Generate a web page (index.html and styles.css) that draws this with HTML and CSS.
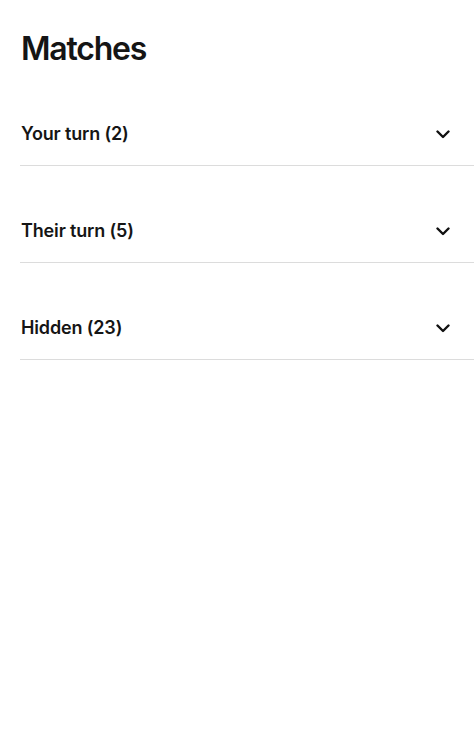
FILE: index.html
```html
<!DOCTYPE html>
<html>
<head>
<meta charset="utf-8">
<link rel="stylesheet" href="styles.css">
</head>
<body>
<main class="page">
  <h1 class="title">Matches</h1>
  <div class="section">
    <span class="label">Your turn (2)</span>
    <svg class="chev" viewBox="0 0 14 9" width="14" height="9"><path d="M1.5 1.5 L7 7 L12.5 1.5" fill="none" stroke="#111" stroke-width="2.4" stroke-linecap="round" stroke-linejoin="round"/></svg>
  </div>
  <div class="section">
    <span class="label">Their turn (5)</span>
    <svg class="chev" viewBox="0 0 14 9" width="14" height="9"><path d="M1.5 1.5 L7 7 L12.5 1.5" fill="none" stroke="#111" stroke-width="2.4" stroke-linecap="round" stroke-linejoin="round"/></svg>
  </div>
  <div class="section">
    <span class="label">Hidden (23)</span>
    <svg class="chev" viewBox="0 0 14 9" width="14" height="9"><path d="M1.5 1.5 L7 7 L12.5 1.5" fill="none" stroke="#111" stroke-width="2.4" stroke-linecap="round" stroke-linejoin="round"/></svg>
  </div>
</main>
</body>
</html>
```
FILE: styles.css
```css
html, body {
  margin: 0;
  padding: 0;
  background: #fff;
}
body {
  font-family: Inter, "Noto Sans", sans-serif;
  color: #151515;
}
.page {
  padding-left: 20px;
}
.title {
  margin: 0;
  padding: 29px 0 0 1px;
  font-size: 32px;
  line-height: 40px;
  font-weight: 600;
  letter-spacing: -1.2px;
}
.section {
  display: flex;
  align-items: center;
  justify-content: space-between;
  padding: 54px 24px 20px 1px;
  border-bottom: 1px solid #dcdcdc;
}
.label {
  font-size: 18px;
  line-height: 22px;
  font-weight: 600;
  letter-spacing: -0.15px;
}
.chev {
  display: block;
}
```
